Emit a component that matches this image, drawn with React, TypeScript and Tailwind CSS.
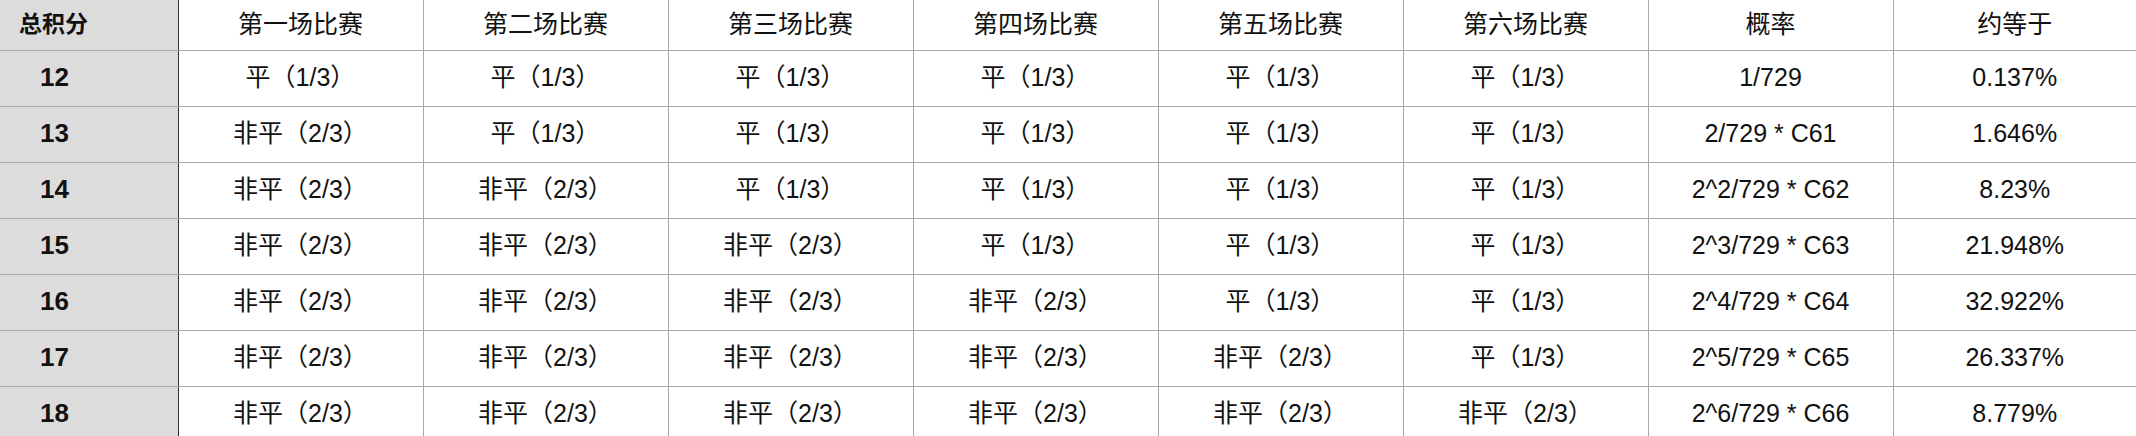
const headers = ["第一场比赛", "第二场比赛", "第三场比赛", "第四场比赛", "第五场比赛", "第六场比赛", "概率", "约等于"];

const rows = [
  { score: 12, wins: 0, prob: "1/729", approx: "0.137%" },
  { score: 13, wins: 1, prob: "2/729 * C61", approx: "1.646%" },
  { score: 14, wins: 2, prob: "2^2/729 * C62", approx: "8.23%" },
  { score: 15, wins: 3, prob: "2^3/729 * C63", approx: "21.948%" },
  { score: 16, wins: 4, prob: "2^4/729 * C64", approx: "32.922%" },
  { score: 17, wins: 5, prob: "2^5/729 * C65", approx: "26.337%" },
  { score: 18, wins: 6, prob: "2^6/729 * C66", approx: "8.779%" },
];

const font = { fontFamily: '"Liberation Sans", "Noto Sans CJK SC", sans-serif' };

export default function App() {
  return (
    <div className="w-[2136px] h-[436px] overflow-hidden bg-white text-[#111]" style={font}>
      <table className="table-fixed border-collapse w-[2136px] text-[25px] leading-none">
        <colgroup>
          <col className="w-[178px]" />
          {headers.map((h, i) => (
            <col key={h} className={i === 7 ? "w-[243px]" : "w-[245px]"} />
          ))}
        </colgroup>
        <thead>
          <tr className="h-[50px]">
            <th className="bg-[#dcdcdc] border-b border-r border-b-[#a8a8a8] border-r-[#333] text-left pl-[19px] font-bold text-[23px]">
              总积分
            </th>
            {headers.map((h, i) => (
              <th
                key={h}
                className={`font-normal text-center border-b border-[#a8a8a8] ${i < 7 ? "border-r" : ""}`}
              >
                {h}
              </th>
            ))}
          </tr>
        </thead>
        <tbody>
          {rows.map((r) => (
            <tr key={r.score} className="h-[56px]">
              <td className="bg-[#dcdcdc] border-b border-r border-b-[#a8a8a8] border-r-[#333] pl-[40px] font-bold text-[26px] pb-[3px]">
                {r.score}
              </td>
              {[0, 1, 2, 3, 4, 5].map((g) => (
                <td key={g} className="text-center border-b border-r border-[#a8a8a8] pb-[1px]">
                  {g < r.wins ? "非平（2/3）" : "平（1/3）"}
                </td>
              ))}
              <td className="text-center border-b border-r border-[#a8a8a8] pb-[1px]">{r.prob}</td>
              <td className="text-center border-b border-[#a8a8a8] pb-[1px]">{r.approx}</td>
            </tr>
          ))}
        </tbody>
      </table>
    </div>
  );
}
